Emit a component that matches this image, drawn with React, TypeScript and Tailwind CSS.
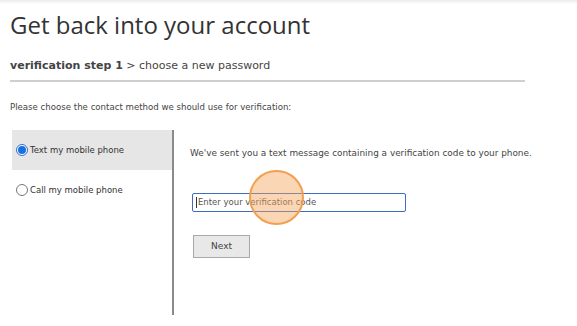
export default function App() {
  return (
    <div className="relative w-[577px] h-[326px] overflow-hidden bg-white" style={{ fontFamily: "'DejaVu Sans', Verdana, sans-serif" }}>
      <div className="h-[4px] bg-gradient-to-b from-[#ececec] to-white" />

      {/* header */}
      <h1 className="ml-[10px] mt-[7px] text-[24px] leading-[28px] text-[#333]" style={{ fontFamily: "'Open Sans', 'Noto Sans', sans-serif" }}>
        Get back into your account
      </h1>
      <div className="ml-[10px] mt-[20px] text-[11px] leading-[14px] text-[#444]">
        <span className="font-bold">verification step 1</span> &gt; choose a new password
      </div>
      <div className="ml-[10px] mt-[7px] w-[515px] h-[2px] bg-[#cfcfcf]" />

      <p className="ml-[10px] mt-[20px] text-[8.6px] leading-[10px] text-[#444]">
        Please choose the contact method we should use for verification:
      </p>

      {/* body */}
      <div className="ml-[12px] mt-[18px] flex">
        <div className="w-[160px] flex flex-col">
          <label className="h-[40px] bg-[#e6e6e6] flex items-center pl-[4px] gap-[2px] text-[8.5px] text-[#333]">
            <span className="w-[12px] h-[12px] rounded-full border border-[#2f6fd6] bg-white flex items-center justify-center">
              <span className="w-[8px] h-[8px] rounded-full bg-[#1a6fe0]" />
            </span>
            Text my mobile phone
          </label>
          <label className="h-[40px] flex items-center pl-[4px] gap-[2px] text-[8.5px] text-[#333]">
            <span className="w-[12px] h-[12px] rounded-full border border-[#777] bg-white" />
            Call my mobile phone
          </label>
        </div>
        <div className="w-[2px] h-[185px] bg-[#8a8a8a]" />
        <div className="pl-[16px] flex flex-col items-start">
          <p className="mt-[18px] text-[8.9px] leading-[10px] text-[#444]">
            We've sent you a text message containing a verification code to your phone.
          </p>
          <div className="relative ml-[2px] mt-[35px] w-[214px] h-[19px] rounded-[2px] border-[1.5px] border-[#3d6cc0] flex items-center pl-[3px] text-[8.5px] text-[#555]">
            <span className="w-px h-[11px] bg-[#333] mr-px" />
            Enter your verification code
            <span className="absolute left-[56px] top-[-24px] w-[55px] h-[55px] rounded-full border-2 border-[#f0a050] bg-[#f5a55a]/45" />
          </div>
          <button className="ml-[3px] mt-[23px] w-[57px] h-[23px] border border-[#a8a8a8] bg-[#e8e8e8] text-[9px] text-[#444]">
            Next
          </button>
        </div>
      </div>
    </div>
  );
}
